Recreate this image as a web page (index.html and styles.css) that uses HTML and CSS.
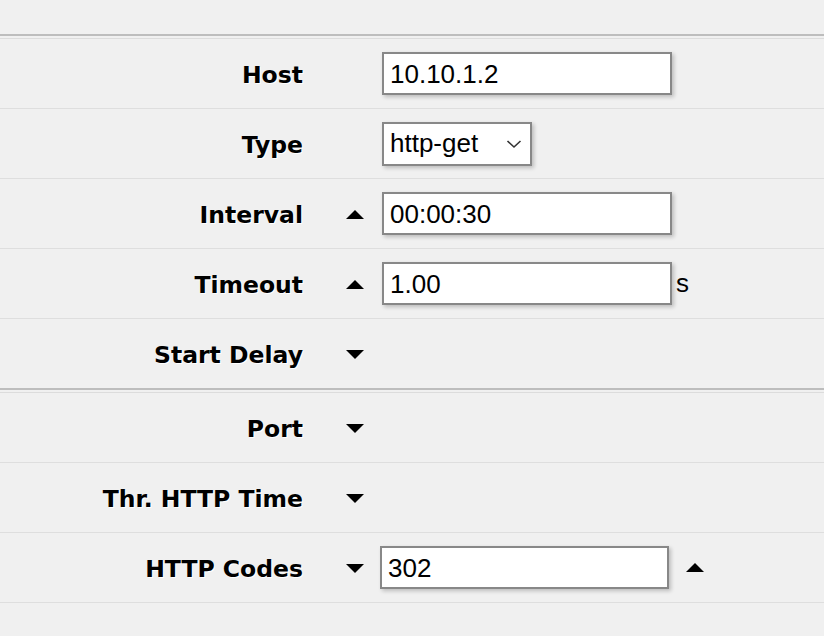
FILE: index.html
```html
<!DOCTYPE html>
<html>
<head>
<meta charset="utf-8">
<link rel="stylesheet" href="styles.css">
</head>
<body>
<div class="page">
  <div class="top"></div>
  <div class="sep"></div>
  <div class="row">
    <div class="label">Host</div>
    <div class="arrow"></div>
    <div class="field"><input class="input" type="text" value="10.10.1.2"></div>
  </div>
  <div class="row">
    <div class="label">Type</div>
    <div class="arrow"></div>
    <div class="field">
      <div class="select"><span>http-get</span>
        <svg class="chev" width="16" height="10" viewBox="0 0 16 10"><polyline points="1.5,2 8,8 14.5,2" fill="none" stroke="#333" stroke-width="1.6"/></svg>
      </div>
    </div>
  </div>
  <div class="row">
    <div class="label">Interval</div>
    <div class="arrow"><svg width="20" height="11" viewBox="0 0 20 11"><polygon points="10,1 19,10 1,10" fill="#000"/></svg></div>
    <div class="field"><input class="input" type="text" value="00:00:30"></div>
  </div>
  <div class="row">
    <div class="label">Timeout</div>
    <div class="arrow"><svg width="20" height="11" viewBox="0 0 20 11"><polygon points="10,1 19,10 1,10" fill="#000"/></svg></div>
    <div class="field"><input class="input" type="text" value="1.00"><span class="unit">s</span></div>
  </div>
  <div class="row row-last">
    <div class="label">Start Delay</div>
    <div class="arrow"><svg width="20" height="11" viewBox="0 0 20 11"><polygon points="1,1 19,1 10,10" fill="#000"/></svg></div>
  </div>
  <div class="sep"></div>
  <div class="row">
    <div class="label">Port</div>
    <div class="arrow"><svg width="20" height="11" viewBox="0 0 20 11"><polygon points="1,1 19,1 10,10" fill="#000"/></svg></div>
  </div>
  <div class="row">
    <div class="label">Thr. HTTP Time</div>
    <div class="arrow"><svg width="20" height="11" viewBox="0 0 20 11"><polygon points="1,1 19,1 10,10" fill="#000"/></svg></div>
  </div>
  <div class="row">
    <div class="label">HTTP Codes</div>
    <div class="arrow"><svg width="20" height="11" viewBox="0 0 20 11"><polygon points="1,1 19,1 10,10" fill="#000"/></svg></div>
    <div class="field field-codes"><input class="input input-codes" type="text" value="302">
      <span class="after-arrow"><svg width="20" height="11" viewBox="0 0 20 11"><polygon points="10,1 19,10 1,10" fill="#000"/></svg></span>
    </div>
  </div>
</div>
</body>
</html>
```

FILE: styles.css
```css
html, body {
  margin: 0;
  padding: 0;
  background: #f0f0f0;
}
.page {
  width: 824px;
  height: 636px;
  background: #f0f0f0;
  overflow: hidden;
}
.top {
  height: 34px;
}
.sep {
  height: 2px;
  border-top: 2px solid #bdbdbd;
  border-bottom: 1px solid #dcdcdc;
}
.row {
  height: 69px;
  border-bottom: 1px solid #dedede;
  display: flex;
  align-items: center;
}
.row-last {
  border-bottom: none;
}
.label {
  width: 303px;
  flex: none;
  text-align: right;
  padding-top: 3px;
  font-family: "DejaVu Sans", sans-serif;
  font-weight: bold;
  font-size: 23.5px;
  color: #000;
  text-shadow: 1px 1px 0 #fff;
}
.arrow {
  width: 20px;
  height: 11px;
  margin-left: 42px;
  margin-top: 1px;
  flex: none;
  display: flex;
}
.arrow svg, .after-arrow svg {
  display: block;
}
.field {
  margin-left: 17px;
  display: flex;
  align-items: center;
}
.field-codes {
  margin-left: 15px;
}
.input {
  box-sizing: border-box;
  width: 290px;
  height: 43px;
  margin: 0;
  border: 2px solid #888;
  background: #fff;
  padding: 1px 6px 0;
  font-family: "Liberation Sans", Arial, sans-serif;
  font-size: 26px;
  color: #000;
  box-shadow: 2px 2px 4px rgba(0, 0, 0, 0.22);
  outline: none;
}
.input-codes {
  width: 289px;
}
.select {
  box-sizing: border-box;
  width: 150px;
  height: 44px;
  border: 2px solid #888;
  background: #fff;
  padding: 0 8px 0 6px;
  display: flex;
  align-items: center;
  justify-content: space-between;
  font-family: "Liberation Sans", Arial, sans-serif;
  font-size: 26px;
  color: #000;
  box-shadow: 2px 2px 4px rgba(0, 0, 0, 0.22);
}
.chev {
  display: block;
}
.unit {
  margin-left: 4px;
  font-family: "Liberation Sans", Arial, sans-serif;
  font-size: 26px;
  color: #000;
}
.after-arrow {
  margin-left: 16px;
  display: flex;
}
```
